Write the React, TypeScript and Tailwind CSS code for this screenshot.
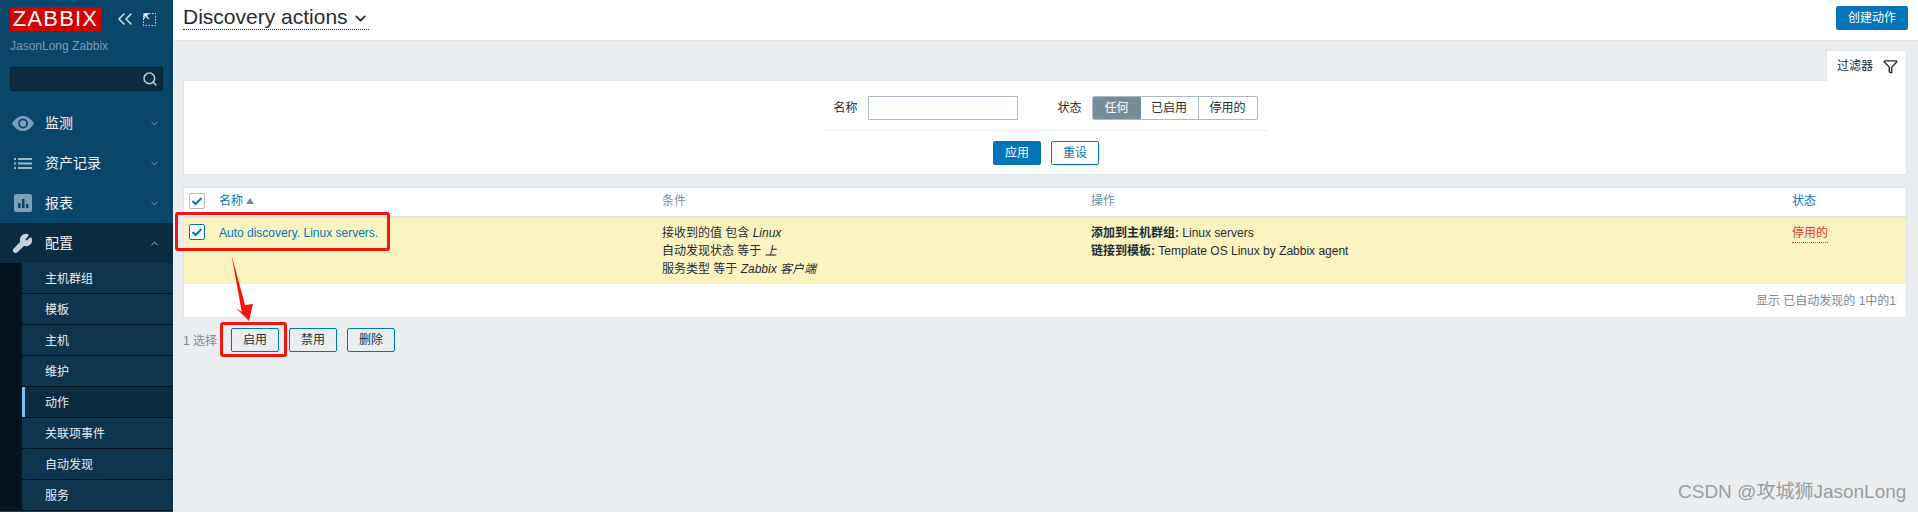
import React from 'react';
import { ChevronDown, ChevronUp, ChevronsLeft, Wrench, Search, Funnel } from 'lucide-react';

const FONT = '"Liberation Sans", "Noto Sans CJK SC", sans-serif';

const SUB_ITEMS = ['主机群组', '模板', '主机', '维护', '动作', '关联项事件', '自动发现', '服务'];

const EyeIcon = () => (
    <svg width="22" height="15" viewBox="0 0 22 15">
        <path d="M0 7.5C3 2.5 7 0 11 0S19 2.5 22 7.5C19 12.5 15 15 11 15S3 12.5 0 7.5Z" fill="#7ba0b8" />
        <circle cx="11" cy="7.5" r="5" fill="#0a466a" />
        <circle cx="11" cy="7.5" r="3.2" fill="#7ba0b8" />
    </svg>
);

const ListIcon = () => (
    <svg width="18" height="11" viewBox="0 0 18 11" fill="#9db7c8">
        <rect x="0" y="0" width="2" height="2" />
        <rect x="4" y="0" width="14" height="2" />
        <rect x="0" y="4.5" width="2" height="2" />
        <rect x="4" y="4.5" width="14" height="2" />
        <rect x="0" y="9" width="2" height="2" />
        <rect x="4" y="9" width="14" height="2" />
    </svg>
);

const ReportIcon = () => (
    <svg width="18" height="18" viewBox="0 0 18 18">
        <rect width="18" height="18" rx="2" fill="#7ba0b8" />
        <rect x="4" y="9" width="2.5" height="5" fill="#0a466a" />
        <rect x="8" y="5" width="2.5" height="9" fill="#0a466a" />
        <rect x="12" y="10" width="2.5" height="4" fill="#0a466a" />
    </svg>
);

const MenuItem: React.FC<{ icon: React.ReactNode; label: string; open?: boolean }> = ({ icon, label, open }) => (
    <div className={`flex items-center h-10 pl-[11px] pr-[13px] ${open ? 'bg-[#0a2b40]' : ''}`}>
        <span className="w-[23px] h-5 flex items-center justify-center">{icon}</span>
        <span className="ml-[11px] flex-1 text-[14px] text-[#f2f6f8]">{label}</span>
        {open ? <ChevronUp size={11} className="text-[#b5c8d4]" /> : <ChevronDown size={11} className="text-[#8fb0c4]" />}
    </div>
);

const Checkbox: React.FC<{ dark?: boolean }> = ({ dark }) => (
    <span className={`w-4 h-4 flex items-center justify-center rounded-[2px] border bg-white ${dark ? 'border-[#0275b8]' : 'border-[#acbbc7]'}`}>
        <svg width="12" height="10" viewBox="0 0 12 10" fill="none">
            <path d="M1.5 5 L4.5 8 L10.5 2" stroke="#0275b8" strokeWidth="2" />
        </svg>
    </span>
);

const OutlineButton: React.FC<{ label: string }> = ({ label }) => (
    <button className="w-12 h-6 rounded-[2px] border border-[#0275b8] text-[12px] text-[#1f2c33] bg-transparent">{label}</button>
);

const App: React.FC = () => {
    return (
        <div className="relative flex w-[1918px] h-[512px] overflow-hidden bg-[#ebeef0] text-[12px] text-[#1f2c33]" style={{ fontFamily: FONT }}>
            <aside className="w-[173px] shrink-0 bg-[#0a466a] flex flex-col">
                <div className="flex items-center pl-[10px] pt-[7px]">
                    <div className="w-[91px] h-6 bg-[#d40000] text-white text-[22px] leading-6 tracking-[1.2px] text-center">ZABBIX</div>
                    <ChevronsLeft size={24} strokeWidth={1.5} className="ml-[12px] text-[#d5e0e8]" />
                    <svg width="13" height="13" viewBox="0 0 13 13" fill="none" className="ml-[6px]">
                        <path d="M3 .5H12.5V12.5H.5V3" stroke="#d5e0e8" strokeDasharray="1.5 1.5" />
                        <path d="M1 1L6 6M1 1H5L1 5Z" stroke="#e6edf2" strokeWidth="1.3" />
                    </svg>
                </div>
                <div className="pl-[10px] mt-[8px] text-[12px] leading-[14px] text-[#7d9bb0]">JasonLong Zabbix</div>
                <div className="mx-[10px] mt-[14px] h-6 rounded-[2px] border border-[#04202f] bg-[#0a2b40] flex items-center justify-end pr-[4px]">
                    <Search size={16} strokeWidth={2.4} className="text-[#b9c6cf]" />
                </div>
                <div className="mt-[12px]">
                    <MenuItem icon={<EyeIcon />} label="监测" />
                    <MenuItem icon={<ListIcon />} label="资产记录" />
                    <MenuItem icon={<ReportIcon />} label="报表" />
                    <MenuItem open icon={<Wrench size={21} fill="#c3d0d9" stroke="#c3d0d9" />} label="配置" />
                </div>
                <div className="bg-[#04141f] pl-[22px]">
                    {SUB_ITEMS.map((item) => (
                        <div
                            key={item}
                            className={`h-[31px] flex items-center pl-[23px] pt-px text-[12px] text-[#e8eef2] border-b border-[#04141f] ${item === '动作' ? 'bg-[#0a2b40] relative' : 'bg-[#0e344e]'}`}
                        >
                            {item === '动作' && <span className="absolute left-0 top-0 bottom-0 w-[3px] bg-[#76c2f5]" />}
                            {item}
                        </div>
                    ))}
                </div>
            </aside>

            <main className="flex-1 min-w-0 flex flex-col">
                <header className="h-[41px] shrink-0 bg-white border-b border-[#dfe4e7] flex items-start justify-between pl-[10px] pr-[10px]">
                    <div className="flex items-center h-[30px] pt-[5px] border-b border-dotted border-[#1f2c33] text-[21px] leading-[24px] text-[#1f2c33]">
                        Discovery actions
                        <ChevronDown size={17} strokeWidth={2.4} className="ml-[4px] mt-[3px]" />
                    </div>
                    <button className="w-[72px] h-6 mt-[6px] rounded-[2px] bg-[#0275b8] text-white text-[12px]">创建动作</button>
                </header>

                <div className="pl-[10px] pr-[11px] pt-[9px] flex flex-col">
                    <div className="flex justify-end">
                        <div className="w-[81px] h-[31px] -mb-px relative z-10 bg-white border border-b-0 border-[#dfe4e7] flex items-center pl-[10px] gap-[10px]">
                            过滤器
                            <Funnel size={15} strokeWidth={2.2} className="text-[#1f2c33]" />
                        </div>
                    </div>
                    <section className="h-[95px] bg-white border border-[#dfe4e7] flex flex-col items-center">
                        <div className="w-[443px] h-[49px] mt-[1px] flex items-start pt-[14px] pl-[10px] border-b border-[#ebeef0]">
                            <span className="leading-6 mr-[10px]">名称</span>
                            <span className="w-[150px] h-6 border border-[#acbbc7] bg-white" />
                            <span className="leading-6 ml-[40px] mr-[10px]">状态</span>
                            <div className="flex h-6 border border-[#acbbc7] rounded-[2px] overflow-hidden">
                                <span className="w-12 bg-[#768d99] text-white text-center leading-[22px]">任何</span>
                                <span className="w-[58px] text-center leading-[22px] border-r border-[#acbbc7]">已启用</span>
                                <span className="w-[58px] text-center leading-[22px]">停用的</span>
                            </div>
                        </div>
                        <div className="flex gap-[10px] mt-[10px] ml-[2px]">
                            <button className="w-12 h-6 rounded-[2px] bg-[#0275b8] text-white">应用</button>
                            <button className="w-12 h-6 rounded-[2px] border border-[#0275b8] text-[#0275b8]">重设</button>
                        </div>
                    </section>

                    <section className="mt-[12px] h-[131px] bg-white border border-[#dfe4e7]">
                        <div className="h-[30px] pb-[2px] flex items-center border-b-2 border-[#dfe4e7] text-[#768d99]">
                            <span className="w-[35px] pl-[5px]"><Checkbox /></span>
                            <span className="w-[443px] text-[#0275b8] flex items-center">
                                名称
                                <svg width="8" height="6" viewBox="0 0 8 6" className="ml-[3px]"><path d="M4 0L8 6H0Z" fill="#768d99" /></svg>
                            </span>
                            <span className="w-[429px]">条件</span>
                            <span className="w-[701px]">操作</span>
                            <span className="text-[#0275b8]">状态</span>
                        </div>
                        <div className="h-[66px] flex bg-[#fbf4c1] border-b border-[#ebeef0] leading-[18px] pt-[6px]">
                            <span className="w-[35px] pl-[5px]"><Checkbox dark /></span>
                            <span className="w-[443px] text-[#0275b8]">Auto discovery. Linux servers.</span>
                            <div className="w-[429px]">
                                <div>接收到的值 包含 <i>Linux</i></div>
                                <div>自动发现状态 等于 <i>上</i></div>
                                <div>服务类型 等于 <i>Zabbix 客户端</i></div>
                            </div>
                            <div className="w-[701px]">
                                <div><b>添加到主机群组:</b> Linux servers</div>
                                <div><b>链接到模板:</b> Template OS Linux by Zabbix agent</div>
                            </div>
                            <span className="h-[19px] text-[#e33734] border-b border-dotted border-[#e33734]">停用的</span>
                        </div>
                        <div className="h-[33px] flex items-center justify-end pr-[10px] text-[#768d99]">显示 已自动发现的 1中的1</div>
                    </section>

                    <div className="mt-[10px] flex items-center text-[#768d99]">
                        <span className="w-[48px] pt-[2px]">1 选择</span>
                        <div className="flex gap-[10px]">
                            <OutlineButton label="启用" />
                            <OutlineButton label="禁用" />
                            <OutlineButton label="删除" />
                        </div>
                    </div>
                </div>
            </main>

            {/* screenshot annotations */}
            <div className="absolute left-[175px] top-[212px] w-[215px] h-[39px] rounded-[3px] border-[3px] border-[#f7140f]" />
            <div className="absolute left-[220px] top-[322px] w-[67px] h-[35px] rounded-[3px] border-[3px] border-[#f7140f]" />
            <svg className="absolute left-[230px] top-[254px]" width="24" height="68" viewBox="0 0 24 68">
                <path d="M1.5 1L15 51L23 50L19 67L6 54L11.7 57.7Z" fill="#f7140f" />
            </svg>
            <div className="absolute left-[1678px] top-[482px] text-[19px] leading-5 text-[#9a9da0]" style={{ fontFamily: FONT }}>
                CSDN @攻城狮JasonLong
            </div>
        </div>
    );
};

export default App;
